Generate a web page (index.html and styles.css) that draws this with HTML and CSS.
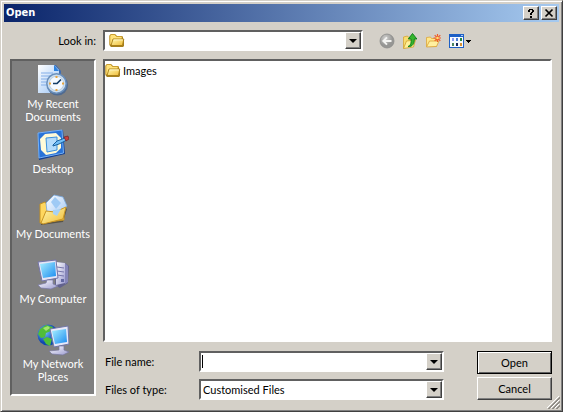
FILE: index.html
```html
<!DOCTYPE html>
<html lang="en">
<head>
<meta charset="utf-8">
<title>Open</title>
<link rel="stylesheet" href="styles.css">
</head>
<body>
<svg class="defs" aria-hidden="true">
  <defs>
    <linearGradient id="gold" x1="0" y1="0" x2="1" y2="1"><stop offset="0" stop-color="#fff8b0"/><stop offset="1" stop-color="#f0bc38"/></linearGradient>
    <linearGradient id="paper" x1="0" y1="0" x2="1" y2="1"><stop offset="0" stop-color="#ffffff"/><stop offset="1" stop-color="#9cc4f4"/></linearGradient>
    <linearGradient id="screen" x1="0" y1="0" x2="1" y2="1"><stop offset="0" stop-color="#a8f0ff"/><stop offset="1" stop-color="#1c8cf0"/></linearGradient>
    <linearGradient id="plastic" x1="0" y1="0" x2="1" y2="1"><stop offset="0" stop-color="#ffffff"/><stop offset="1" stop-color="#9a9ad0"/></linearGradient>
    <radialGradient id="globe" cx=".35" cy=".35"><stop offset="0" stop-color="#7cc8ff"/><stop offset="1" stop-color="#1048b0"/></radialGradient>
    <radialGradient id="grey" cx=".4" cy=".3"><stop offset="0" stop-color="#d0d0ce"/><stop offset="1" stop-color="#969694"/></radialGradient>
    <symbol id="folder" viewBox="0 0 16 16">
      <path d="M1 14l-.5-1V3.500L2 2h4l2 2h5l1 1v2l1 1v6l-1 1H2z" fill="#a5801f"/>
      <path d="M.9 12.500V4l1-1.500h3.600l2 2h5.500v8z" fill="#ffe27a" stroke="#c99a28" stroke-width=".8"/>
      <path d="M4 7h10.800l-1.300 6.500H2z" fill="url(#gold)" stroke="#a67c14" stroke-width=".9"/>
      <path d="M4.600 7.900h9.200" stroke="#fffbd0" stroke-width=".9"/>
    </symbol>
  </defs>
</svg>
<main class="dialog">
  <header class="titlebar">
    <h1 class="title">Open</h1>
    <button class="caption-button" type="button" aria-label="Help">
      <svg width="10" height="10" viewBox="0 0 10 10"><path d="M2 2h2v2H2zM3 1h4v1H3zM6 2h2v2H6zM5 4h2v1H5zM4 5h2v2H4zM4 8h2v2H4z" fill="#000"/></svg>
    </button>
    <button class="caption-button" type="button" aria-label="Close">
      <svg width="10" height="10" viewBox="0 0 10 10"><path d="M1.500 1.500l7 7M8.500 1.500l-7 7" stroke="#000" stroke-width="1.700"/></svg>
    </button>
  </header>
  <form class="body">
    <div class="toolbar">
      <label class="look-label" for="look">Look in:</label>
      <div class="combo look-combo">
        <svg class="combo-icon" width="16" height="16"><use href="#folder"/></svg>
        <select class="combo-input" id="look"><option></option></select>
        <span class="arrow"></span>
      </div>
      <div class="tools">
        <button class="tool" type="button" aria-label="Back">
          <svg width="16" height="16" viewBox="0 0 16 16"><circle cx="8" cy="8" r="7" fill="url(#grey)" stroke="#8c8c8a" stroke-width=".8"/><path d="M12.500 8H4.500M8 4.300L4.300 8 8 11.700" fill="none" stroke="#f4f4f2" stroke-width="1.900"/></svg>
        </button>
        <button class="tool" type="button" aria-label="Up one level">
          <svg width="16" height="16" viewBox="0 0 16 16"><path d="M1.500 15V4l4-1 1 1.500 5-1V13z" fill="#f7dc70" stroke="#d5a634" stroke-width=".8"/><path d="M4.500 8l9-1-2 7-10 1.500z" fill="#fff09a" stroke="#cf9e2b" stroke-width=".8"/><path d="M6 13.500c3-1 3.300-3.500 3.100-7.500H6.300L10.500.5 14.900 6h-2.600c.2 4.500-1.800 8-6.300 7.500z" fill="#35b52d" stroke="#087a18" stroke-width=".9"/></svg>
        </button>
        <button class="tool" type="button" aria-label="Create new folder">
          <svg width="16" height="16" viewBox="0 0 16 16"><path d="M1.500 13.500v-9l4-.5 1 1.500h5v8z" fill="#ffe78a" stroke="#dca63a" stroke-width=".8"/><path d="M4.500 8H14l-2.500 5.500-10 .5z" fill="#fff0a0" stroke="#d8a035" stroke-width=".8"/><path d="M12.500 1v8M8.500 5h8M9.700 2.200l5.600 5.600M15.300 2.200L9.700 7.800" stroke="#f05a28" stroke-width="1.200"/><circle cx="12.500" cy="5" r="1.300" fill="#ffe070"/></svg>
        </button>
        <button class="tool" type="button" aria-label="View menu">
          <svg width="24" height="16" viewBox="0 0 24 16"><path d="M1 1h15v14H1z" fill="#1d5fc5"/><path d="M2 4h13v10H2z" fill="#f8fbff"/><path d="M13 2h2v1h-2z" fill="#a7ccff"/><path d="M4 5h2v3H4z" fill="#8b9cf0"/><path d="M8 5h2v3H8z" fill="#4d80d8"/><path d="M12 5h2v3h-2z" fill="#248544"/><path d="M4 10h2v3H4z" fill="#4b8560"/><path d="M8 10h2v3H8z" fill="#172a5c"/><path d="M12 10h2v3h-2z" fill="#d69032"/><path d="M18 7h5v1h-1v1h-1v1h-1V9h-1V8h-1z" fill="#000"/></svg>
        </button>
      </div>
    </div>
    <nav class="places" aria-label="Places">
      <button class="place" type="button">
        <svg width="32" height="32" viewBox="0 0 32 32"><path d="M3 2l1-1h15l5 6v22H3z" fill="#426daf"/><path d="M1 1h16l5 5v23H1z" fill="url(#paper)"/><path d="M17 1v6h5z" fill="#2d83e0"/><path d="M4 9h12M4 12h10M4 15h7M4 18h7M4 21h7" stroke="#83aee8"/><circle cx="20.500" cy="21" r="10.500" fill="#506b91"/><circle cx="19.500" cy="19.500" r="9.700" fill="#cfdfee" stroke="#6a90bc" stroke-width="1.500"/><circle cx="19.500" cy="19.500" r="7.200" fill="#f5faff" stroke="#b7cde2"/><path d="M19.500 12v2M19.500 25v2M12 19.500h2M25 19.500h2" stroke="#e9a63f" stroke-width="2"/><path d="M16 19.500h4l4-4" fill="none" stroke="#123b65" stroke-width="1.700"/></svg>
        <span>My Recent<br>Documents</span>
      </button>
      <button class="place" type="button">
        <svg width="32" height="32" viewBox="0 0 32 32"><path d="M1 4l25-3 2 24-26 6z" fill="#123f92"/><path d="M1 4l24-3 1.500 23L2 29z" fill="#2873d8" stroke="#75b0f5"/><path d="M8 5l11-1 5 5v10l-5 5-10 2-5-5-1-11z" fill="#fffbd8"/><path d="M9 9l11-1v13l-10 2z" fill="#b4dcfc" stroke="#3d91dc"/><path d="M16 16l4-4 8-3 2 2-8 4-6 2z" fill="#72bff8" stroke="#17609f"/><path d="M27 8l4-1 1 3-3 2z" fill="#c8403c" stroke="#712323" stroke-width=".7"/></svg>
        <span>Desktop</span>
      </button>
      <button class="place" type="button">
        <svg width="32" height="32" viewBox="0 0 32 32"><path d="M4 31V11l4-2 3 4h16l3 2-4 13z" fill="#575348"/><path d="M3 29V10l5-2 3 4 16 1v13z" fill="#ffd75f" stroke="#c39123"/><path d="M9 9l8-8 9 2 4 9-10 12-10-6z" fill="url(#paper)" stroke="#76a7df" stroke-width=".8"/><path d="M14 8l4-5 6 6-5 6z" fill="#9fcaf5"/><path d="M4 29l5-12 9 1 11-5-3 12-20 5z" fill="url(#gold)" stroke="#c99423"/><path d="M16 16l8-1-4 7-4-2z" fill="#a7d2f6"/></svg>
        <span>My Documents</span>
      </button>
      <button class="place" type="button">
        <svg width="32" height="32" viewBox="0 0 32 32"><path d="M19 3l9 1 4 3-1 17-8 5-5-3z" fill="#62628e"/><path d="M19 3l9 1v20l-9 2z" fill="url(#plastic)"/><path d="M28 4l3 3v16l-3 2z" fill="#8585b8"/><path d="M20 8l7 1M20 12l7 1M20 16l7 1" stroke="#7777ac"/><path d="M24 20h3v3h-3z" fill="#6368a2"/><path d="M1 3l18-2 2 18-16 3z" fill="#e5e5f6" stroke="#7474aa"/><path d="M3 5l15-2 1 14-13 2z" fill="url(#screen)"/><path d="M10 21h6v4l5 2-7 3-10-1-3-3 8-2z" fill="url(#plastic)" stroke="#7878a8" stroke-width=".7"/></svg>
        <span>My Computer</span>
      </button>
      <button class="place" type="button">
        <svg width="32" height="32" viewBox="0 0 32 32"><circle cx="11" cy="11" r="10.500" fill="url(#globe)"/><path d="M3 5l6-4 7 2-2 4-5 2-1 4-4 1-3-4zM10 13l5 2-2 7-4-2-3-5z" fill="#51bd38"/><path d="M6 4l5-2 2 2-4 3z" fill="#a4e36d"/><path d="M13 5l18-3 1 18-15 3z" fill="#e7e8f8" stroke="#7377a7"/><path d="M15 7l14-2 1 13-12 2z" fill="url(#screen)"/><path d="M22 22h5v4l5 2-6 3-11-1-3-3 10-1z" fill="url(#plastic)" stroke="#77779e" stroke-width=".7"/></svg>
        <span>My Network<br>Places</span>
      </button>
    </nav>
    <section class="content">
      <ul class="listing">
        <li class="file"><svg width="16" height="16"><use href="#folder"/></svg><span>Images</span></li>
      </ul>
      <div class="footer">
        <div class="fields">
          <label for="filename">File name:</label>
          <div class="combo">
            <span class="caret"></span>
            <input class="combo-input" id="filename" type="text">
            <button class="arrow" type="button" aria-label="Recent file names"></button>
          </div>
          <label for="filetype">Files of type:</label>
          <div class="combo">
            <select class="combo-input" id="filetype"><option>Customised Files</option></select>
            <span class="arrow"></span>
          </div>
        </div>
        <div class="actions">
          <button class="action default" type="submit">Open</button>
          <button class="action" type="button">Cancel</button>
        </div>
      </div>
    </section>
  </form>
  <svg class="grip" width="13" height="13" viewBox="0 0 13 13"><path d="M0 12L12 0M4 12l8-8M8 12l4-4" stroke="#fff"/><path d="M1 13L13 1M2 13L13 2M5 13l8-8M6 13l7-7M9 13l4-4M10 13l3-3" stroke="#908d87"/></svg>
</main>
</body>
</html>
```

FILE: styles.css
```css
* { box-sizing: border-box; }

body {
  margin: 0;
  background: #d4d0c8;
  color: #000;
  font: 11px/15px Lato, "Liberation Sans", sans-serif;
}

button, input, select { font: inherit; color: inherit; }
svg { display: block; flex: none; }
.defs { position: absolute; width: 0; height: 0; }

.dialog {
  position: relative;
  display: flex;
  flex-direction: column;
  min-height: 100vh;
  padding: 3px;
  background: #d4d0c8;
  border: 1px solid;
  border-color: #d4d0c8 #404040 #404040 #d4d0c8;
  box-shadow: inset 1px 1px #fff, inset -1px -1px #808080;
}

.titlebar {
  display: flex;
  align-items: center;
  gap: 2px;
  height: 18px;
  padding: 0 2px;
  background: linear-gradient(90deg, #0a246a, #a6caf0);
}

.title {
  flex: 1;
  margin: 0;
  color: #fff;
  font: bold 11px/14px "DejaVu Sans Condensed", sans-serif;
}

.caption-button, .arrow, .action {
  padding: 0;
  background: #d4d0c8;
  border: 1px solid;
  border-color: #fff #404040 #404040 #fff;
  box-shadow: inset -1px -1px #808080;
}

.caption-button {
  display: grid;
  place-items: center;
  width: 16px;
  height: 14px;
}

.body {
  flex: 1;
  display: grid;
  grid-template-columns: 86px 1fr;
  grid-template-rows: auto 1fr;
  gap: 8px 7px;
  padding: 8px 7px 8px 6px;
}

.toolbar {
  grid-column: 1 / -1;
  display: grid;
  grid-template-columns: 86px minmax(120px, 260px) auto;
  gap: 7px;
  align-items: center;
}

.look-label { text-align: right; }

.tools {
  display: flex;
  gap: 7px;
  padding-left: 9px;
}

.tool { padding: 0; background: none; border: 0; }

.combo {
  display: flex;
  align-items: stretch;
  height: 21px;
  background: #fff;
  border: 2px solid;
  border-color: #606060 #fff #fff #606060;
}

.combo-icon { margin-left: 4px; }

.combo-input {
  flex: 1;
  min-width: 0;
  padding: 0 2px;
  appearance: none;
  background: none;
  border: 0;
  outline: 0;
}

.arrow {
  display: grid;
  place-items: center;
  width: 16px;
  pointer-events: none;
}

.arrow::before {
  content: "";
  border: 4px solid transparent;
  border-top-color: #000;
  border-bottom: 0;
}

.caret { width: 1px; margin: 2px 0 2px 1px; background: #000; }

.places {
  display: grid;
  grid-auto-rows: 65px;
  align-content: start;
  margin-bottom: 4px;
  background: #808080;
  border: 2px solid;
  border-color: #606060 #fff #fff #606060;
}

.place {
  display: flex;
  flex-direction: column;
  align-items: center;
  gap: 1px;
  padding: 3px 0 0;
  color: #fff;
  line-height: 13px;
  background: none;
  border: 0;
}

.content {
  display: flex;
  flex-direction: column;
  gap: 9px;
  min-width: 0;
}

.listing {
  flex: 1;
  margin: 0;
  padding: 1px 0;
  list-style: none;
  background: #fff;
  border: 2px solid;
  border-color: #606060 #fff #fff #606060;
}

.file { display: flex; align-items: center; gap: 2px; }

.footer { display: flex; justify-content: space-between; gap: 8px; }

.fields {
  display: grid;
  grid-template-columns: 94px minmax(120px, 245px);
  gap: 7px 0;
  align-items: center;
  flex: 0 1 341px;
  padding-left: 2px;
}

.actions { display: grid; gap: 3px; width: 75px; }
.action { height: 23px; }
.default { border-color: #000; box-shadow: inset 1px 1px #fff, inset -1px -1px #606060; }

.grip { position: absolute; right: 2px; bottom: 2px; }
```
